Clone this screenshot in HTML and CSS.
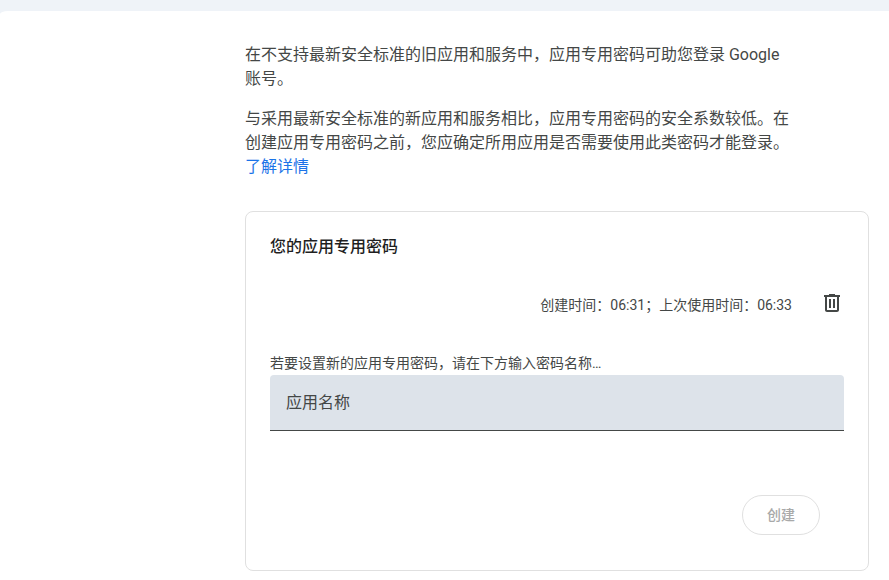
FILE: index.html
```html
<!DOCTYPE html>
<html lang="zh-CN">
<head>
  <meta charset="utf-8">
  <meta name="viewport" content="width=device-width, initial-scale=1">
  <title>应用专用密码</title>
  <link rel="stylesheet" href="styles.css">
</head>
<body>
  <main class="panel">
    <section class="intro">
      <p>在不支持最新安全标准的旧应用和服务中，应用专用密码可助您登录 Google 账号。</p>
      <p>与采用最新安全标准的新应用和服务相比，应用专用密码的安全系数较低。在创建应用专用密码之前，您应确定所用应用是否需要使用此类密码才能登录。<a href="#details">了解详情</a></p>
    </section>
    <section class="card">
      <h2 class="card-title">您的应用专用密码</h2>
      <div class="password-row">
        <span class="times">创建时间：06:31；上次使用时间：06:33</span>
        <button class="icon-button" type="button" aria-label="删除">
          <svg width="24" height="24" viewBox="0 0 24 24" fill="currentColor" aria-hidden="true">
            <path d="M15 4V3H9v1H4v2h1v13c0 1.1.9 2 2 2h10c1.1 0 2-.9 2-2V6h1V4h-5zm2 15H7V6h10v13zM9 8h2v9H9zm4 0h2v9h-2z"/>
          </svg>
        </button>
      </div>
      <form>
        <label class="hint" for="app-name">若要设置新的应用专用密码，请在下方输入密码名称…</label>
        <input class="field" id="app-name" type="text" placeholder="应用名称">
        <div class="actions">
          <button class="create" type="button" disabled>创建</button>
        </div>
      </form>
    </section>
  </main>
</body>
</html>
```
FILE: styles.css
```css
* {
  box-sizing: border-box;
}

body {
  margin: 0;
  padding-top: 11px;
  background: #eff3f8;
  color: #444746;
  font: 16px/24px Roboto, "Noto Sans CJK SC", sans-serif;
}

.panel {
  min-height: calc(100vh - 11px);
  padding: 32px 20px 8px 245px;
  background: #fff;
  border-top-left-radius: 8px 3px;
}

.intro {
  padding-right: 72px;
}

.intro p {
  margin: 0 0 16px;
}

.intro a {
  color: #1a73e8;
  text-decoration: none;
}

.card {
  margin-top: 32px;
  padding: 23px 24px 35px;
  border: 1px solid #e0e0e0;
  border-radius: 8px;
}

.card-title {
  margin: 0;
  color: #1f1f1f;
  font-size: 16px;
  font-weight: 500;
  line-height: 24px;
}

.password-row {
  display: flex;
  align-items: center;
  justify-content: flex-end;
  gap: 16px;
  margin-top: 20px;
  font-size: 14px;
}

.times {
  padding-top: 4px;
}

.icon-button {
  display: grid;
  place-items: center;
  width: 48px;
  height: 48px;
  padding: 0;
  margin-right: -12px;
  border: 0;
  border-radius: 50%;
  background: none;
  color: #444746;
}

.hint {
  display: block;
  margin-top: 24px;
  font-size: 14px;
  line-height: 24px;
}

.field {
  display: block;
  width: 100%;
  height: 56px;
  padding: 0 16px;
  border: 0;
  border-bottom: 1px solid #444746;
  border-radius: 4px 4px 0 0;
  background: #dde3ea;
  color: #1f1f1f;
  font: inherit;
}

.field::placeholder {
  color: #444746;
  opacity: 1;
}

.actions {
  display: flex;
  justify-content: flex-end;
  margin-top: 64px;
  padding-right: 24px;
}

.create {
  height: 40px;
  padding: 0 24px;
  border: 1px solid #e0e0e0;
  border-radius: 20px;
  background: #fff;
  color: #a8a9a9;
  font: 500 14px/20px Roboto, "Noto Sans CJK SC", sans-serif;
}
```
